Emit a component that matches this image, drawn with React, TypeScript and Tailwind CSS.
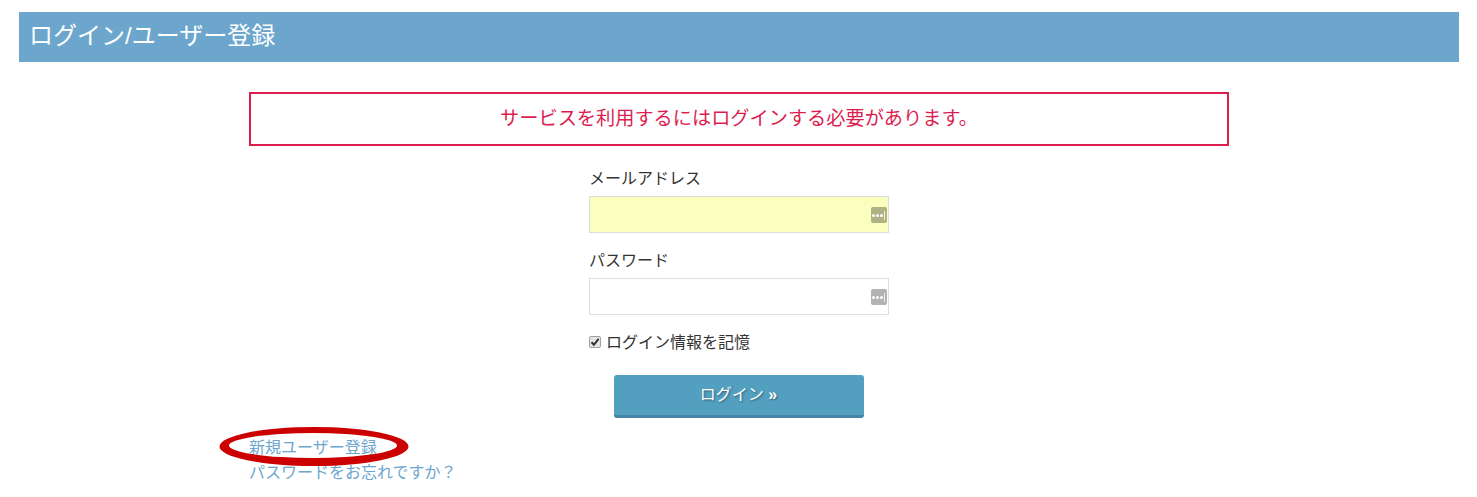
import React from 'react';

const FONT = { fontFamily: '"Liberation Sans", "Noto Sans CJK JP", sans-serif' };

const KeyIcon = () => (
  <span className="absolute right-[1px] top-[10px] w-4 h-4 rounded-[2px] bg-black/30 flex items-center pl-[1px] gap-[1px]">
    <span className="w-[3px] h-[3px] rounded-full bg-white" />
    <span className="w-[3px] h-[3px] rounded-full bg-white" />
    <span className="w-[3px] h-[3px] rounded-full bg-white" />
    <span className="w-[1px] h-[9px] bg-white/80" />
  </span>
);

const Field = ({ label, filled }: { label: string; filled?: boolean }) => (
  <div className="w-[300px]">
    <label className="block text-base leading-6 text-[#333333] pt-[1px] mb-[5px]">{label}</label>
    <div className={`relative h-[37px] border border-[#dddddd] ${filled ? 'bg-[#faffbd]' : 'bg-white'}`}>
      <KeyIcon />
    </div>
  </div>
);

export default function App() {
  return (
    <div style={FONT} className="bg-white min-h-[497px] px-[19px] pt-3 pr-[18px]">
      <h1 className="h-[50px] bg-[#6ca6cd] text-white text-2xl leading-[48px] pl-[10px]">ログイン/ユーザー登録</h1>

      <div className="w-[980px] ml-[230px] mt-[30px]">
        <div className="h-[54px] border-2 border-[#dc1e4f] text-[#dc1e4f] text-[19.2px] flex items-center justify-center">
          サービスを利用するにはログインする必要があります。
        </div>

        <div className="w-[300px] ml-[340px] mt-[20px]">
          <Field label="メールアドレス" filled />
          <div className="mt-[15px]">
            <Field label="パスワード" />
          </div>
          <label className="flex items-center mt-[15px] h-6 text-base text-[#333333]">
            <span className="relative w-3 h-3 mr-[5px] rounded-[2px] border border-[#a0a0a0] bg-[#e4e4e4] shrink-0">
              <input type="checkbox" defaultChecked className="absolute inset-0 opacity-0 m-0" />
              <svg className="absolute left-0 top-0" width="10" height="10" viewBox="0 0 10 10">
                <path d="M1.5 5.2 L3.9 7.8 L8.6 1.8" fill="none" stroke="#333333" strokeWidth="2" />
              </svg>
            </span>
            <span className="pt-[1px]">ログイン情報を記憶</span>
          </label>
          <button className="block w-[250px] h-[43px] ml-[25px] mt-[21px] pr-[1px] bg-[#539fbf] border-b-[3px] border-[#4385a2] rounded-[3px] text-white text-base [text-shadow:1px_1px_2px_rgba(0,0,0,0.4)]">
            ログイン <span className="font-bold">»</span>
          </button>
        </div>

        <div className="relative mt-[18px] text-base leading-6 text-[#6ca6cd]">
          <a className="block">新規ユーザー登録</a>
          <a className="block mt-[1px]">パスワードをお忘れですか？</a>
          <svg className="absolute left-[-30px] top-[-9px]" width="190" height="40" viewBox="0 0 190 40">
            <path
              fillRule="evenodd"
              fill="#cc0000"
              d="M0.5 19.5 A94.5 19.5 0 1 0 189.5 19.5 A94.5 19.5 0 1 0 0.5 19.5 Z M10 18.5 A84 12.5 0 1 1 178 18.5 A84 12.5 0 1 1 10 18.5 Z"
            />
          </svg>
        </div>
      </div>
    </div>
  );
}
